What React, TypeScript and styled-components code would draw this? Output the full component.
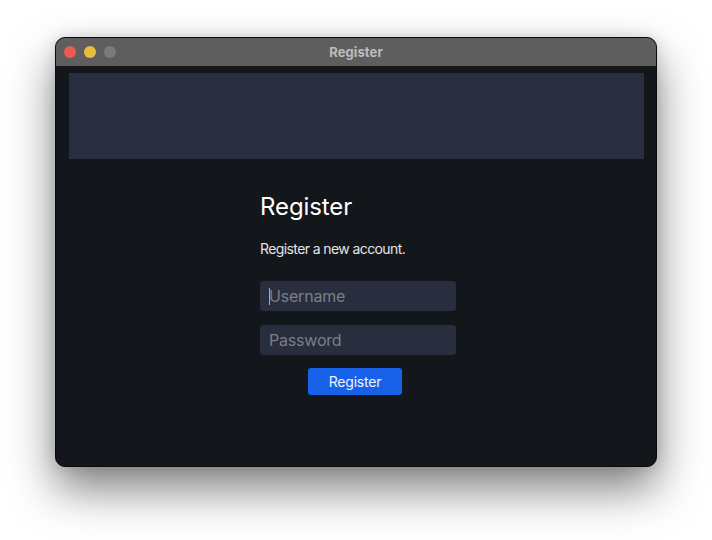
import React from "react";
import styled, { createGlobalStyle } from "styled-components";

const Global = createGlobalStyle`
  html, body { margin: 0; padding: 0; background: #ffffff; }
  body { font-family: Inter, "Noto Sans", sans-serif; }
  * { box-sizing: border-box; }
`;

const Page = styled.div`
  width: 712px;
  height: 540px;
  padding: 37px 0 0 55px;
  overflow: hidden;
`;

const Window = styled.div`
  width: 602px;
  height: 430px;
  border: 1px solid #0b0b0c;
  border-radius: 10px;
  overflow: hidden;
  display: flex;
  flex-direction: column;
  background: #13161b;
  box-shadow: 0 22px 45px rgba(0, 0, 0, 0.5), 0 0 14px rgba(0, 0, 0, 0.12);
`;

const TitleBar = styled.div`
  height: 29px;
  flex: none;
  background: #5e5e5e;
  border-bottom: 1px solid #141414;
  display: grid;
  grid-template-columns: 1fr auto 1fr;
  align-items: center;
  padding: 0 8px;
`;

const Lights = styled.div`
  display: flex;
  gap: 8px;
`;

const Light = styled.span<{ $c: string }>`
  width: 12px;
  height: 12px;
  border-radius: 50%;
  background: ${(p) => p.$c};
`;

const WinTitle = styled.div`
  font-family: Inter, sans-serif;
  font-weight: 700;
  font-size: 13px;
  color: #bdbdbd;
  letter-spacing: 0.1px;
`;

const Content = styled.div`
  flex: 1;
  padding: 6px 12px 0 13px;
  display: flex;
  flex-direction: column;
`;

const Banner = styled.div`
  height: 86px;
  background: #292f40;
`;

const Form = styled.form`
  width: 196px;
  margin: 34px 0 0 191px;
  display: flex;
  flex-direction: column;
`;

const Heading = styled.h1`
  margin: 0;
  font-size: 24px;
  line-height: 28px;
  font-weight: 400;
  color: #ffffff;
  letter-spacing: -0.1px;
`;

const Sub = styled.p`
  margin: 18px 0 0;
  font-size: 14px;
  line-height: 20px;
  color: #e4e5e7;
  letter-spacing: -0.6px;
`;

const Field = styled.div<{ $gap: number }>`
  position: relative;
  margin-top: ${(p) => p.$gap}px;
`;

const Input = styled.input`
  display: block;
  width: 196px;
  height: 30px;
  border: none;
  outline: none;
  border-radius: 3px;
  background: #282e3e;
  padding: 0 9px;
  font-family: Inter, sans-serif;
  font-size: 16px;
  letter-spacing: -0.2px;
  color: #e4e5e7;
  &::placeholder { color: #7c7f87; }
`;

const Caret = styled.span`
  position: absolute;
  left: 9px;
  top: 7px;
  width: 1px;
  height: 17px;
  background: #a9abb0;
`;

const Button = styled.button`
  margin: 13px 0 0 48px;
  align-self: flex-start;
  width: 94px;
  height: 27px;
  border: none;
  border-radius: 3px;
  background: #1761e8;
  color: #eef3ff;
  font-family: Inter, sans-serif;
  font-size: 14px;
  letter-spacing: -0.2px;
  padding: 0;
`;

export default function App() {
  return (
    <Page>
      <Global />
      <Window>
        <TitleBar>
          <Lights>
            <Light $c="#ec5b52" />
            <Light $c="#eabc3d" />
            <Light $c="#7b7b7b" />
          </Lights>
          <WinTitle>Register</WinTitle>
          <span />
        </TitleBar>
        <Content>
          <Banner />
          <Form onSubmit={(e) => e.preventDefault()}>
            <Heading>Register</Heading>
            <Sub>Register a new account.</Sub>
            <Field $gap={22}>
              <Input placeholder="Username" />
              <Caret />
            </Field>
            <Field $gap={14}>
              <Input placeholder="Password" type="password" />
            </Field>
            <Button type="submit">Register</Button>
          </Form>
        </Content>
      </Window>
    </Page>
  );
}
